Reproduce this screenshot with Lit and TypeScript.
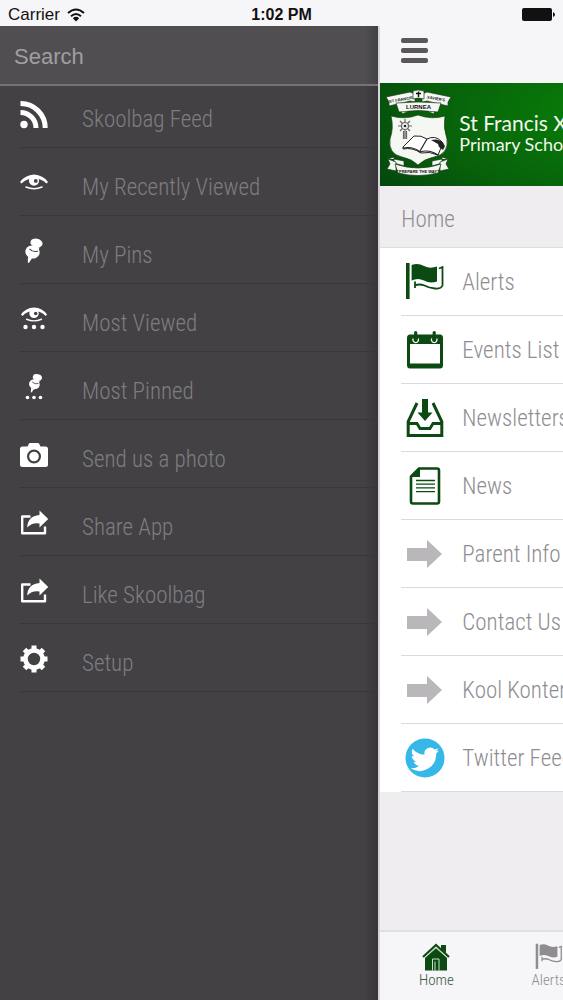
import { LitElement, html, css, svg } from "lit";
import { customElement } from "lit/decorators.js";

const eye = svg`
  <path d="M0 13Q5 6 14 5.500Q23 6 28 13L26.500 14.500Q21.500 9.500 14 9Q6.500 9.500 1.500 14.500Z"/>
  <path d="M6 18Q14 21.500 22 18" fill="none" stroke="currentColor" stroke-width="1.500" stroke-linecap="round"/>
  <path fill-rule="evenodd" d="M14 6.500a5 5 0 1 1 0 10.200a5 5 0 0 1 0-10.200ZM15.800 10a1.900 1.900 0 1 0 0 3.800a1.900 1.900 0 0 0 0-3.800Z"/>`;
const pin = svg`
  <ellipse cx="16.500" cy="6" rx="6.200" ry="4.300" transform="rotate(12 16.500 6)"/>
  <path d="M12.500 8.500l7 2l-1.500 5l-7-1Z"/>
  <ellipse cx="12.500" cy="15" rx="7.200" ry="6.500" transform="rotate(18 12.500 15)"/>
  <path d="M8 20l4 1.200L8.800 26L7.800 25.500Z"/>
  <path d="M9.500 11.800q3.500 4 8.500 2.200" fill="none" stroke="#434144" stroke-width="1.100"/>`;
const share = svg`
  <path d="M10.500 7.500H2.200V24.300H25V17.500" fill="none" stroke="currentColor" stroke-width="2.400" stroke-linejoin="round"/>
  <path d="M19.500 1.500L28.300 10L19.500 18.500V14.500Q12 13.300 7.200 18.500Q7.500 7 19.500 5.900Z"/>`;
const arrow = svg`<path d="M2 14H22V6L37 20L22 34V27H2Z"/>`;
const flag = svg`
  <path d="M1 1H4.600V37H1Z"/>
  <path d="M6.600 3Q13 .5 19 4Q25 7 32 4.500V19.500Q25 22 19 18.500Q13 15.500 6.600 18.500Z"/>
  <path d="M34 6.500l3.500-1.500V23.500Q36 27 30 26.500Q24 26 19.500 23.500Q14 21.500 10 23.500M10 19.500V26" fill="none" stroke="currentColor" stroke-width="1.800"/>`;

const icons: Record<string, unknown> = {
  rss: svg`<circle cx="4" cy="23.500" r="3.700"/><path d="M.5 11.500A15.500 15.500 0 0 1 16 27M.5 2.500A24.500 24.500 0 0 1 25.200 27" fill="none" stroke="currentColor" stroke-width="5"/>`,
  eye,
  pin,
  mostEye: svg`<g transform="translate(1 -2.500) scale(.93)">${eye}</g><circle cx="5.500" cy="22" r="2.200"/><circle cx="14" cy="22" r="2.200"/><circle cx="22.500" cy="22" r="2.200"/>`,
  mostPin: svg`<g transform="translate(5 0) scale(.75)">${pin}</g><circle cx="7.500" cy="24.500" r="1.800"/><circle cx="14" cy="24.500" r="1.800"/><circle cx="20.500" cy="24.500" r="1.800"/>`,
  camera: svg`<path fill-rule="evenodd" d="M2.500 5.500H7.500L9 2.500Q9.400 2 10 2H18Q18.600 2 19 2.500L20.500 5.500H25.500Q28 5.500 28 8V23.500Q28 26 25.500 26H2.500Q0 26 0 23.500V8Q0 5.500 2.500 5.500ZM14 8.500a7 7 0 1 0 0 14a7 7 0 0 0 0-14Z"/><circle cx="14" cy="15.500" r="4.800"/>`,
  share,
  gear: svg`<circle cx="14" cy="14" r="8.500" fill="none" stroke="currentColor" stroke-width="4.600"/>
    <path d="M14 .5V5M14 23V27.500M.5 14H5M23 14H27.500M4.500 4.500L7.500 7.500M20.500 20.500L23.500 23.500M4.500 23.500L7.500 20.500M20.500 7.500L23.500 4.500" stroke="currentColor" stroke-width="5"/>`,
  flag,
  calendar: svg`<path fill-rule="evenodd" d="M5 4.500H35Q38 4.500 38 8V35Q38 38.500 35 38.500H5Q2 38.500 2 35V8Q2 4.500 5 4.500ZM5 14V33.500H35V14Z"/>
    <path d="M8.200 8.500a2.800 2.800 0 1 0 5 0M26.700 8.500a2.800 2.800 0 1 0 5 0" fill="none" stroke="#fff" stroke-width="1.300"/>
    <path d="M10.700 2.500V9M29.200 2.500V9" stroke="currentColor" stroke-width="3.200" stroke-linecap="round"/>`,
  inbox: svg`<path d="M12 5L3.200 23.500V37.500H36.800V23.500L28 5" fill="none" stroke="currentColor" stroke-width="3"/>
    <path d="M3 25.500H12L15 30.500H25L28 25.500H37" fill="none" stroke="currentColor" stroke-width="2.800"/>
    <path d="M17 1H23V14.500H27.500L20 23L12.500 14.500H17Z"/>`,
  news: svg`<path d="M14 2.500H32Q34 2.500 34 4.500V35.500Q34 37.500 32 37.500H8Q6 37.500 6 35.500V10.500Z" fill="none" stroke="currentColor" stroke-width="2.600"/>
    <path d="M13.500 2L15 3V11H6V9.500Z"/><path d="M11 14.500H30M11 18.200H30M11 21.900H30M11 25.600H30" stroke="currentColor" stroke-width="1.300"/>`,
  arrow,
  twitter: svg`<circle cx="20" cy="20" r="19.500"/>
    <path fill="#fff" transform="translate(-1.500 -1) scale(1.060)" d="M33.500 12.600c-1 .5-2 .8-3.100.9c1.100-.7 2-1.700 2.400-3c-1 .6-2.200 1.100-3.500 1.300a5.500 5.500 0 0 0-9.400 5c-4.600-.2-8.600-2.400-11.300-5.700c-1.700 2.900-.6 5.900 1.700 7.400c-.9 0-1.700-.3-2.500-.7c0 2.700 1.900 4.900 4.400 5.500c-.8.200-1.600.2-2.500.1c.7 2.200 2.700 3.800 5.100 3.800a11 11 0 0 1-8.100 2.300a15.600 15.600 0 0 0 24.100-13.900c1.100-.8 2-1.800 2.700-3Z"/>`,
};

@customElement("app-root")
export class AppRoot extends LitElement {
  static styles = css`
    :host {
      display: flex;
      flex-direction: column;
      min-height: 100vh;
      background: #f6f5f8;
      color: #8f8d91;
      font-family: "Roboto Condensed", "Liberation Sans Narrow", Roboto, sans-serif;
      font-weight: 300;
      overflow: hidden;
    }
    * { box-sizing: border-box; }
    ul { list-style: none; margin: 0; padding: 0; }
    a { color: inherit; text-decoration: none; }
    svg { display: block; flex: none; fill: currentColor; }
    .status {
      display: grid;
      grid-template-columns: 1fr auto 1fr;
      align-items: center;
      height: 26px;
      padding: 3px 8px 0;
      color: #111;
      font: 400 17px/20px "Liberation Sans", sans-serif;
    }
    .carrier { display: flex; align-items: center; gap: 7px; }
    .time { font-weight: 700; font-size: 16px; }
    .battery { justify-self: end; }
    .stage { flex: 1; display: grid; grid-template-columns: 67.2% 100%; }
    .drawer {
      background: linear-gradient(to right, transparent calc(100% - 14px), #38363a), #434144;
    }
    .search {
      display: block;
      width: 100%;
      height: 60px;
      padding: 3px 14px 0;
      border: 0;
      border-bottom: 2px solid #747276;
      border-radius: 0;
      background: linear-gradient(to right, transparent calc(100% - 14px), #434144), #504e51;
      color: #fff;
      font: 400 22px/28px "Liberation Sans", sans-serif;
    }
    .search::placeholder { color: #a19fa2; opacity: 1; }
    .menu { display: flex; flex-direction: column; gap: 6px; }
    .menu li { margin-left: 20px; border-bottom: 1px solid #39373a; }
    .menu a { display: flex; align-items: center; gap: 34px; height: 61px; }
    .menu svg { color: #fff; margin-bottom: 4px; }
    .menu .label { padding-top: 6px; color: #7f7d81; }
    .label { padding-top: 2px; font-size: 23px; line-height: 30px; white-space: nowrap; }
    .page {
      display: flex;
      flex-direction: column;
      min-width: 0;
      border-left: 2px solid #d6d5d8;
      background: #efedf0;
    }
    .bar { display: flex; align-items: center; height: 57px; padding: 0 21px 8px; background: #f6f5f8; }
    .burger { padding: 0; border: 0; background: none; color: #59575a; }
    .banner {
      display: flex;
      align-items: center;
      gap: 7px;
      height: 103px;
      padding-left: 4px;
      background: radial-gradient(ellipse 280px 130px at 240px 30px, #098209, #075f0a 70%, #04480f);
      color: #f2f8f0;
      font: 400 18px/20px Lato, sans-serif;
      white-space: nowrap;
    }
    .banner p { margin: 0; padding-bottom: 2px; }
    .saint { font-size: 21px; }
    .heading { margin: 0; padding: 19px 21px 12px; border-bottom: 1px solid #dfdde0; font-weight: 300; }
    .list { background: #fff; }
    .list li { margin-left: 21px; border-bottom: 1px solid #dad9db; }
    .list a { display: flex; align-items: center; gap: 17px; height: 67px; padding-left: 4px; }
    .green { color: #0b4a11; }
    .grey { color: #b9b7ba; }
    .blue { color: #35b8e8; }
    .tabs {
      display: grid;
      grid-template-columns: repeat(5, 1fr);
      height: 70px;
      margin-top: auto;
      border-top: 2px solid #e0dee1;
      background: #f6f5f8;
      font-size: 15px;
      line-height: 18px;
      text-align: center;
    }
    .tabs a { display: flex; flex-direction: column; align-items: center; padding-top: 11px; }
    .tabs .active span { color: #3c5540; }
  `;

  icon(name: string, box: number, tone = "", size = box) {
    return html`<svg class=${tone} width=${size} height=${size} viewBox="0 0 ${box} ${box}" aria-hidden="true">${icons[name]}</svg>`;
  }

  crest() {
    return html`<svg width="68" height="90" viewBox="0 0 68 90" role="img" aria-label="School crest">
      <g fill="#f5f7f3" stroke="#183d18" stroke-width=".7">
        <path d="M7 26Q21 30 34 25Q48 30 61 26Q59 38 63 49Q65 64 50 67Q40 69 34 75Q28 69 18 67Q4 64 6 49Q10 38 7 26Z"/>
        <path d="M17 18l1 6l5-2l2-3ZM51 18l-1 6l-5-2l-2-3Z"/>
        <path d="M2 7L26 2L31 4V12L26 11L5 16L5 12Z"/>
        <path d="M67 7L43 2L38 4V12L43 11L64 16L64 12Z"/>
        <path d="M29 1Q34-1 40 1V9Q34 7 29 9Z"/>
        <path d="M12 13Q34 11 57 13L54 22Q34 19 15 22Z"/>
        <path d="M4 69L10 67V73L20 76V71L10 69M64 69L58 67V73L48 76V71L58 69"/>
        <path d="M4 69L12 72V81L3 79L6 74ZM64 69L56 72V81L65 79L62 74Z"/>
        <path d="M11 74Q34 82 57 74L54 83Q34 88 14 83Z"/>
      </g>
      <g fill="#111" font-family="Liberation Sans" font-weight="700" text-anchor="middle">
        <text x="17" y="11" font-size="4" transform="rotate(-10 17 10)">ST FRANCIS</text>
        <text x="52" y="10" font-size="4" transform="rotate(10 52 9)">XAVIER'S</text>
        <text x="34.500" y="19" font-size="6">LURNEA</text>
        <text x="34" y="83" font-size="4">"PREPARE THE WAY"</text>
      </g>
      <path d="M34.500 1.500V7M32 3.500H37" stroke="#111" stroke-width="1.400"/>
      <g fill="none" stroke="#666" stroke-width="1.200">
        <circle cx="21" cy="36" r="3.500"/><path d="M21 29V32M21 40V49M14 36H17M25 36H28M16 31L18 33M26 31L24 33M16 41L18 39M26 41L24 39M19.500 41V49M22.500 41V49"/>
      </g>
      <circle cx="21" cy="36" r="1.300" fill="#222"/>
      <path d="M19 57L30 46Q37 45 43 49Q51 45 57 51L59 53L54 65Q45 61 37 63Q28 57 19 59Z" fill="#fff" stroke="#222"/>
      <path d="M43 49L36 61M19 58Q29 56 36 62Q45 59 54 65" fill="none" stroke="#222" stroke-width="1.200"/>
      <path d="M47 50Q55 48 59 53L61 56L59 60L55 57L54 54Z" fill="#222"/>
    </svg>`;
  }

  render() {
    const menu = [
      ["rss", "Skoolbag Feed"], ["eye", "My Recently Viewed"], ["pin", "My Pins"],
      ["mostEye", "Most Viewed"], ["mostPin", "Most Pinned"], ["camera", "Send us a photo"],
      ["share", "Share App"], ["share", "Like Skoolbag"], ["gear", "Setup"],
    ];
    const items = [
      ["flag", "Alerts", "green"], ["calendar", "Events List", "green"], ["inbox", "Newsletters", "green"],
      ["news", "News", "green"], ["arrow", "Parent Info", "grey"], ["arrow", "Contact Us", "grey"],
      ["arrow", "Kool Kontent", "grey"], ["twitter", "Twitter Feed", "blue"],
    ];
    return html`
      <header class="status">
        <span class="carrier">Carrier
          <svg width="18" height="14" viewBox="0 0 18 14" aria-hidden="true">
            <path d="M1 5Q9-2 17 5M4 8.300Q9 3.800 14 8.300" fill="none" stroke="currentColor" stroke-width="2"/>
            <path d="M9 13.500L5.800 10.200Q9 7.500 12.200 10.200Z"/>
          </svg>
        </span>
        <span class="time">1:02 PM</span>
        <svg class="battery" width="33" height="14" viewBox="0 0 33 14" aria-label="Battery full">
          <rect x="0" y="0" width="30" height="13" rx="2"/><path d="M31 4Q33 5 33 6.500T31 9Z"/>
        </svg>
      </header>
      <div class="stage">
        <nav class="drawer" aria-label="Menu">
          <input class="search" type="search" placeholder="Search" aria-label="Search">
          <ul class="menu">
            ${menu.map(([i, t]) => html`<li><a href="#">${this.icon(i, 28)}<span class="label">${t}</span></a></li>`)}
          </ul>
        </nav>
        <main class="page">
          <div class="bar">
            <button class="burger" aria-label="Toggle menu">
              <svg width="27" height="25" viewBox="0 0 27 25"><rect width="27" height="5" rx="2"/><rect y="10" width="27" height="5" rx="2"/><rect y="20" width="27" height="5" rx="2"/></svg>
            </button>
          </div>
          <div class="banner">${this.crest()}<p><span class="saint">St Francis Xavier's</span><br>Primary School</p></div>
          <h1 class="heading label">Home</h1>
          <ul class="list">
            ${items.map(([i, t, c]) => html`<li><a href="#">${this.icon(i, 40, c)}<span class="label">${t}</span></a></li>`)}
          </ul>
          <nav class="tabs" aria-label="Sections">
            <a class="active" href="#">
              <svg class="green" width="28" height="28" viewBox="0 0 28 28" aria-hidden="true">
                <path d="M19 2H24V10L19 6Z"/><path d="M1 14L14 2L27 14" fill="none" stroke="currentColor" stroke-width="2.200"/>
                <path d="M3 14.500L14 4.800L25 14.500V27.500H3Z"/>
                <path d="M3 14.500L14 4.800L25 14.500M10.500 27.500V16H17V27.500M13 27.500V18.500" fill="none" stroke="#cfe0cf" stroke-width="1"/>
              </svg>
              <span>Home</span>
            </a>
            <a href="#">${this.icon("flag", 40, "", 28)}<span>Alerts</span></a>
          </nav>
        </main>
      </div>`;
  }
}
